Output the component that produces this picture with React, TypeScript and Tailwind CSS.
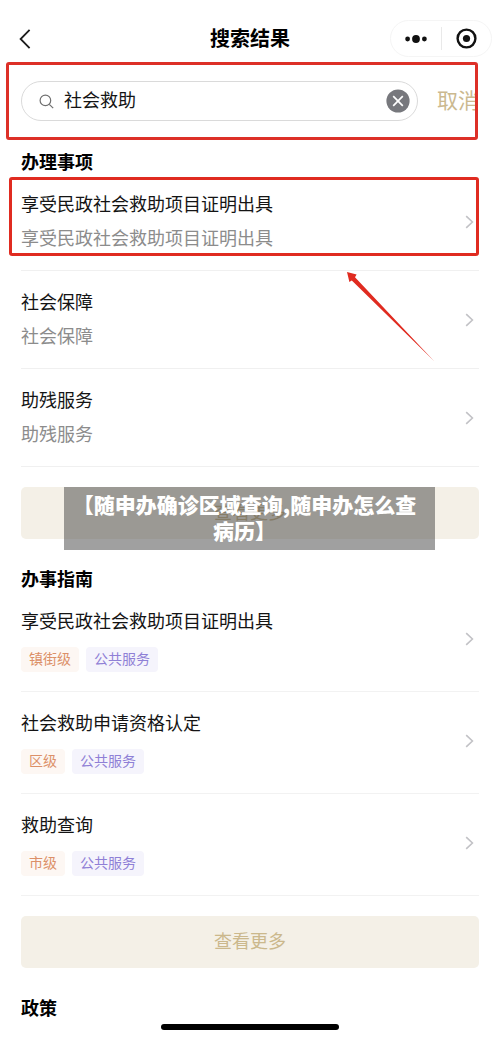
import { useState } from 'react';
import type { ReactNode } from 'react';

const services = ['享受民政社会救助项目证明出具', '社会保障', '助残服务'];

const guides = [
  { title: '享受民政社会救助项目证明出具', level: '镇街级' },
  { title: '社会救助申请资格认定', level: '区级' },
  { title: '救助查询', level: '市级' },
];

function Chevron() {
  return (
    <svg className="mr-[5px] h-[14px] w-[9px] shrink-0" viewBox="0 0 9 14" fill="none" aria-hidden="true">
      <path d="M1.2 1.2 7.4 7 1.2 12.8" stroke="#c2c2c6" strokeWidth="1.6" />
    </svg>
  );
}

function Arrow() {
  return (
    <svg
      className="pointer-events-none absolute top-[1px] left-[326px] z-10 h-[90px] w-[88px]"
      viewBox="0 0 88 90"
      aria-hidden="true"
    >
      <path d="M0 0 9.6 2.4 8 5.2 87 89 4.8 8.4 2.4 10Z" fill="#e02b20" />
    </svg>
  );
}

function SectionTitle({ children }: { children: ReactNode }) {
  return <h2 className="text-[18px] leading-[20px] font-bold text-black">{children}</h2>;
}

function MoreButton() {
  return (
    <button
      type="button"
      className="h-[52px] w-full rounded-[5px] bg-[#f4f0e7] text-[18px] leading-[20px] text-[#cbb88c]"
    >
      查看更多
    </button>
  );
}

export default function App() {
  const [query, setQuery] = useState('社会救助');

  return (
    <div className="bg-white font-['Liberation_Sans','Noto_Sans_CJK_SC',sans-serif] text-[#141414]">
      <header className="grid grid-cols-[1fr_auto_1fr] items-center pt-[20px] pr-[8px] pb-[5px] pl-[8px]">
        <button type="button" aria-label="返回" className="flex h-[37px] w-[34px] items-center justify-center">
          <svg className="h-[20px] w-[12px]" viewBox="0 0 12 20" fill="none" aria-hidden="true">
            <path d="M10.6 0.8 1.6 10l9 9.2" stroke="#1c1c1c" strokeWidth="1.8" />
          </svg>
        </button>
        <h1 className="text-[20px] leading-[30px] font-bold text-black">搜索结果</h1>
        <div className="flex h-[37px] w-[102px] items-center justify-self-end rounded-full border border-[#f5f5f5]">
          <button type="button" aria-label="更多" className="flex h-full flex-1 items-center justify-center">
            <svg className="h-[10px] w-[24px]" viewBox="0 0 24 10" fill="#111" aria-hidden="true">
              <circle cx="3.6" cy="5" r="2.4" />
              <circle cx="12" cy="5" r="3.9" />
              <circle cx="20.4" cy="5" r="2.4" />
            </svg>
          </button>
          <span className="h-[23px] w-px bg-[#e9e9e9]" />
          <button type="button" aria-label="关闭" className="flex h-full flex-1 items-center justify-center">
            <svg className="h-[21px] w-[21px]" viewBox="0 0 21 21" fill="none" aria-hidden="true">
              <circle cx="10.5" cy="10.5" r="8.9" stroke="#111" strokeWidth="2.4" />
              <circle cx="10.5" cy="10.5" r="3.6" fill="#111" />
            </svg>
          </button>
        </div>
      </header>

      <form
        className="mr-[22px] ml-[6px] flex h-[78px] items-center overflow-hidden rounded-[3px] border-[3px] border-[#dd3028] pl-[12px]"
        onSubmit={(e) => e.preventDefault()}
      >
        <div className="flex h-[40px] min-w-0 flex-1 items-center rounded-full border border-[#dadada] pr-[7px] pl-[17px]">
          <label htmlFor="query" aria-label="搜索">
            <svg className="h-[15px] w-[15px]" viewBox="0 0 15 15" fill="none" stroke="#6f6f6f" strokeWidth="1.2" aria-hidden="true">
              <circle cx="6.4" cy="6.4" r="5.3" />
              <path d="m10.3 10.3 3.9 3.9" />
            </svg>
          </label>
          <input
            id="query"
            type="text"
            value={query}
            onChange={(e) => setQuery(e.target.value)}
            className="ml-[10px] min-w-0 flex-1 bg-transparent text-[18px] leading-[26px] text-[#141414] outline-none"
          />
          <button type="button" aria-label="清除" onClick={() => setQuery('')}>
            <svg className="h-[24px] w-[24px]" viewBox="0 0 24 24" aria-hidden="true">
              <circle cx="12" cy="12" r="11.6" fill="#77787d" />
              <path d="m7.2 7.2 9.6 9.6m0-9.6-9.6 9.6" stroke="#fff" strokeWidth="1.7" />
            </svg>
          </button>
        </div>
        <button
          type="button"
          className="ml-[19px] w-[38px] shrink-0 overflow-hidden text-left text-[21px] leading-[28px] whitespace-nowrap text-[#cbb98f]"
        >
          取消
        </button>
      </form>

      <main className="px-[21px] pt-[13px]">
        <section>
          <SectionTitle>办理事项</SectionTitle>
          <ul>
            {services.map((name, i) => (
              <li key={name} className="relative border-b border-[#f0f0f0]">
                <a href="#" className="flex items-center justify-between pt-[15px] pb-[14px]">
                  <span className="flex flex-col text-[18px] leading-[34px]">
                    <span>{name}</span>
                    <span className="text-[#8c8c8c]">{name}</span>
                  </span>
                  <Chevron />
                </a>
                {i === 0 && (
                  <span className="pointer-events-none absolute top-[4px] right-0 left-[-12px] h-[79px] rounded-[3px] border-[3px] border-[#e02b20]" />
                )}
                {i === 1 && <Arrow />}
              </li>
            ))}
          </ul>
          <div className="relative mt-[20px]">
            <MoreButton />
            <p className="absolute top-0 right-[44px] left-[43px] bg-[#424242]/50 pt-[4px] pr-[10px] pb-[7px] text-center font-['Noto_Sans_CJK_SC',sans-serif] text-[21px] leading-[26px] font-black text-white">
              【随申办确诊区域查询,随申办怎么查病历】
            </p>
          </div>
        </section>

        <section className="mt-[31px]">
          <SectionTitle>办事指南</SectionTitle>
          <ul>
            {guides.map(({ title, level }) => (
              <li key={title} className="border-b border-[#f2f2f2]">
                <a href="#" className="flex items-center justify-between pt-[15px] pb-[19px]">
                  <span className="flex flex-col">
                    <span className="text-[18px] leading-[34px]">{title}</span>
                    <span className="mt-[8px] flex gap-[7px] text-[14px] leading-[25px]">
                      <span className="rounded-[4px] bg-[#fdf7f3] px-[8px] text-[#dc9068]">{level}</span>
                      <span className="rounded-[4px] bg-[#f5f4fc] px-[8px] text-[#8f80d6]">公共服务</span>
                    </span>
                  </span>
                  <Chevron />
                </a>
              </li>
            ))}
          </ul>
          <div className="mt-[20px]">
            <MoreButton />
          </div>
        </section>

        <section className="mt-[31px]">
          <SectionTitle>政策</SectionTitle>
        </section>
      </main>

      <div className="flex justify-center pt-[5px] pb-[7px]">
        <span className="h-[6px] w-[178px] rounded-full bg-black" />
      </div>
    </div>
  );
}
